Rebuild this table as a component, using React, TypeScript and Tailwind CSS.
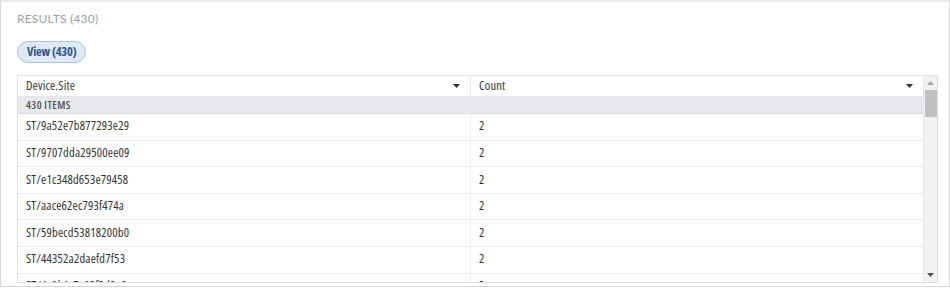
import React from "react";

const rows = [
  { site: "ST/9a52e7b877293e29", count: 2 },
  { site: "ST/9707dda29500ee09", count: 2 },
  { site: "ST/e1c348d653e79458", count: 2 },
  { site: "ST/aace62ec793f474a", count: 2 },
  { site: "ST/59becd53818200b0", count: 2 },
  { site: "ST/44352a2daefd7f53", count: 2 },
  { site: "ST/4a0b1c7e93f2d8a6", count: 2 },
];

// condensed humanist face, close to the narrow sans in the screenshot
const narrow: React.CSSProperties = { fontFamily: "'Open Sans', Lato, sans-serif", fontStretch: "condensed" };

const Caret = () => (
  <svg width="7" height="4" viewBox="0 0 7 4" className="shrink-0">
    <path d="M0 0 L7 0 L3.5 4 Z" fill="#333" />
  </svg>
);

const HeaderCell = ({ label, last }: { label: string; last?: boolean }) => (
  <div
    className={`flex-1 flex items-center justify-between pl-[8px] pr-[10px] ${
      last ? "" : "border-r border-[#e6e6e6]"
    }`}
  >
    <span>{label}</span>
    <Caret />
  </div>
);

export default function App() {
  return (
    <div
      className="w-[950px] h-[289px] bg-white text-[#333]"
      style={{ fontFamily: "Lato, 'Open Sans', sans-serif" }}
    >
      <div className="h-[287px] border border-[#d6d6d6] border-t-[#ececec] border-t-2 pl-[16px] pr-[11px] pt-[9px] overflow-hidden">
        <div className="text-[12px] leading-[16px] text-[#9ba1a8] tracking-[0.2px]">RESULTS (430)</div>

        <div
          className="mt-[14px] inline-flex items-center h-[22px] px-[9px] rounded-full bg-[#dce9f6] border border-[#a9c7e5] text-[12.5px] font-bold text-[#2b5b8c] tracking-[-0.2px]"
          style={narrow}
        >
          View (430)
        </div>

        <div className="mt-[12px] border border-[#dedede] h-[208px] flex text-[12.5px] tracking-[0.2px] overflow-hidden" style={narrow}>
          <div className="flex-1 flex flex-col">
            <div className="h-[21px] flex border-b border-[#e6e6e6] shrink-0">
              <HeaderCell label="Device.Site" />
              <HeaderCell label="Count" last />
            </div>
            <div className="h-[17px] shrink-0 bg-[#e8e9ed] border-b border-[#dcdde2] pl-[8px] flex items-center text-[11px] font-semibold text-[#555] tracking-[0.4px]">
              430 ITEMS
            </div>
            {rows.map((r, i) => (
              <div key={i} className="h-[26.6px] shrink-0 flex border-b border-[#ececec]">
                <div className="flex-1 flex items-center pl-[8px] border-r border-[#ececec]">{r.site}</div>
                <div className="flex-1 flex items-center pl-[8px]">{r.count}</div>
              </div>
            ))}
          </div>
          <div className="w-[14px] shrink-0 bg-[#f1f1f1] border-l border-[#e6e6e6] flex flex-col items-center">
            <div className="h-[14px] flex items-center justify-center">
              <svg width="7" height="4" viewBox="0 0 7 4">
                <path d="M0 4 L7 4 L3.5 0 Z" fill="#a3a3a3" />
              </svg>
            </div>
            <div className="w-[12px] h-[27px] bg-[#c1c1c1]" />
            <div className="flex-1" />
            <div className="h-[14px] flex items-center justify-center">
              <svg width="7" height="4" viewBox="0 0 7 4">
                <path d="M0 0 L7 0 L3.5 4 Z" fill="#505050" />
              </svg>
            </div>
          </div>
        </div>
      </div>
    </div>
  );
}
